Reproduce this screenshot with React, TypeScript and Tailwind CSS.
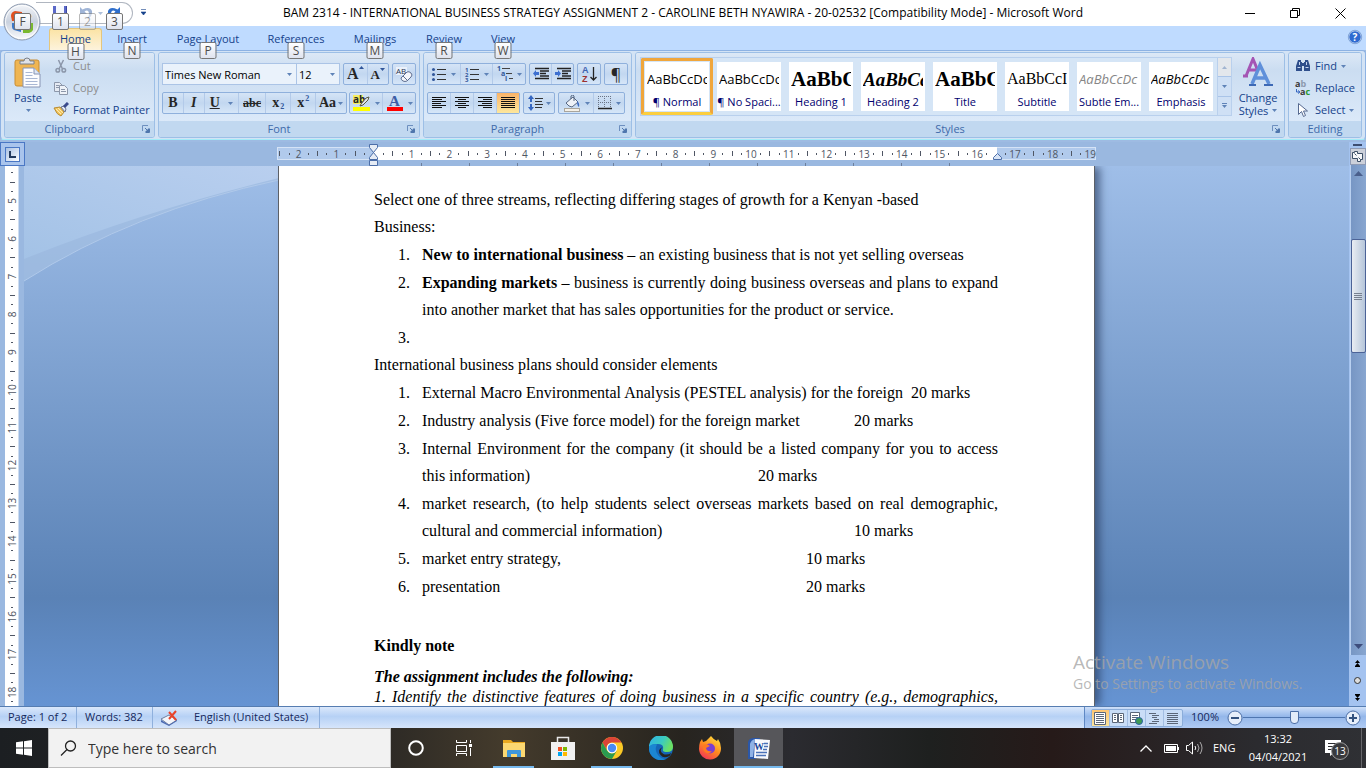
import React from "react";

const cx = (...parts: (string | false | undefined)[]) => parts.filter(Boolean).join(" ");

/* ---------- small shared parts ---------- */

function Caret({ className }: { className?: string }) {
  return (
    <svg width="5" height="3" viewBox="0 0 5 3" className={cx("shrink-0", className)} aria-hidden="true">
      <path d="M0 0h5L2.500 3z" fill="#5f83b8" />
    </svg>
  );
}

function KeyTip({ k, className, faded }: { k: string; className?: string; faded?: boolean }) {
  return (
    <span
      className={cx(
        "absolute z-20 flex h-[17px] w-[17px] items-center justify-center rounded-xs border border-[#767676] bg-linear-to-b from-white to-[#dfe3ee] text-[12px] leading-none text-[#4c4c4c]",
        faded && "opacity-50",
        className,
      )}
    >
      {k}
    </span>
  );
}

function Launcher() {
  return (
    <svg width="8" height="8" viewBox="0 0 8 8" aria-hidden="true">
      <path d="M.5 6V.5H6" fill="none" stroke="#6d8fbf" />
      <path d="M3 3l3 3M7.500 3.500v4h-4" fill="none" stroke="#4f76ad" />
      <path d="M7 3v4H3z" fill="#4f76ad" />
    </svg>
  );
}

function Group({
  label,
  launcher,
  className,
  children,
}: {
  label: string;
  launcher?: boolean;
  className?: string;
  children: React.ReactNode;
}) {
  return (
    <section
      aria-label={label}
      className={cx(
        "flex h-[86px] flex-col overflow-hidden rounded-[3px] border border-[#9dbfe6] bg-[#c7dcf3] shadow-[inset_0_0_0_1px_rgba(255,255,255,0.45)]",
        className,
      )}
    >
      <div className="min-h-0 flex-1 bg-linear-to-b from-[#dce8f6] via-[#cbddf1] via-25% to-[#dbe9f9]">{children}</div>
      <div
        className={cx(
          "relative flex h-4 items-center justify-center bg-[#c1d8f0] text-[11px] text-[#3e6aaa]",
          launcher && "pr-5",
        )}
      >
        {label}
        {launcher && (
          <button aria-label={label + " options"} className="absolute right-1">
            <Launcher />
          </button>
        )}
      </div>
    </section>
  );
}

function Bar({ children, className }: { children: React.ReactNode; className?: string }) {
  return (
    <div
      className={cx(
        "flex h-[22px] divide-x divide-[#b3cae9] rounded-xs border border-[#8fb0dc] bg-linear-to-b from-[#d5e4f6] via-[#c2d7f0] via-50% to-[#d6e6f8]",
        className,
      )}
    >
      {children}
    </div>
  );
}

function Tool({
  label,
  className,
  caret,
  children,
}: {
  label: string;
  className?: string;
  caret?: boolean;
  children: React.ReactNode;
}) {
  return (
    <button aria-label={label} className={cx("flex grow items-center justify-center gap-1 text-[#262626]", className)}>
      {children}
      {caret && <Caret />}
    </button>
  );
}

/* ---------- icons ---------- */

function OfficeLogo() {
  return (
    <svg width="38" height="38" viewBox="0 0 38 38" aria-hidden="true">
      <defs>
        <linearGradient id="orb" x1="0" y1="0" x2="0" y2="1">
          <stop offset="0" stopColor="#f4f6fa" />
          <stop offset=".5" stopColor="#c9d1de" />
          <stop offset="1" stopColor="#fbfcfe" />
        </linearGradient>
      </defs>
      <circle cx="19" cy="19" r="18" fill="url(#orb)" stroke="#8b98ad" />
      <circle cx="19" cy="19" r="16.500" fill="none" stroke="#fff" opacity=".8" />
      <path d="M8 13q0-4 4-5l7 1v9H9z" fill="#e0501f" />
      <path d="M20 10l7 1q2 1 1 4v4h-8z" fill="#f0a020" />
      <path d="M9 20h9v9l-7-2q-2-1-2-3z" fill="#3c78c8" />
      <path d="M20 20h10v7q-1 2-4 3h-6z" fill="#7ab830" />
      <path d="M22 22h5v5h-5z" fill="#f6d23a" />
    </svg>
  );
}

function SaveIcon() {
  return (
    <svg width="16" height="16" viewBox="0 0 16 16" aria-hidden="true">
      <path d="M1 1h14v14H1z" fill="#5a68c8" />
      <path d="M4 1h8v8H4z" fill="#f5f8ff" />
      <path d="M4 11h8v4H4z" fill="#c6cdea" />
      <path d="M14.500 1v14" stroke="#3a45a0" />
    </svg>
  );
}

function ArcArrow({ color, flip }: { color: string; flip?: boolean }) {
  return (
    <svg width="16" height="16" viewBox="0 0 16 16" aria-hidden="true" className={flip ? "-scale-x-100" : ""}>
      <path d="M2 2v7h7L6.500 6.500Q10 4 11 8q.5 3-2 6 6-3 5-8Q12 1 4.500 4.500z" fill={color} />
    </svg>
  );
}

function PasteIcon() {
  return (
    <svg width="28" height="32" viewBox="0 0 28 32" aria-hidden="true">
      <rect x="1" y="3" width="24" height="26" rx="2" fill="#efb552" stroke="#c98d33" />
      <path d="M6 7V4h4q0-3 3-3t3 3h4v3z" fill="#dfe2e8" stroke="#7b8089" />
      <path d="M9 11h11l6 6v13H9z" fill="#fdfdff" stroke="#8794b4" />
      <path d="M20 11v6h6" fill="#dfe7f5" stroke="#8794b4" />
      <path d="M11.500 15.500h7M11.500 18.500h7M11.500 21.500h12M11.500 24.500h12M11.500 27.500h12" stroke="#a9b7d4" />
    </svg>
  );
}

function CutIcon() {
  return (
    <svg width="16" height="16" viewBox="0 0 16 16" fill="none" stroke="#8c97aa" strokeWidth="1.500" aria-hidden="true">
      <path d="M5.500 2l4 9M10.500 2L6 11" />
      <circle cx="4.800" cy="12.300" r="1.800" />
      <circle cx="10.800" cy="12.300" r="1.800" />
    </svg>
  );
}

function CopyIcon() {
  return (
    <svg width="16" height="16" viewBox="0 0 16 16" stroke="#8c97aa" aria-hidden="true">
      <path d="M1.500 2.500h5l3 3v6h-8z" fill="#e6ebf4" />
      <path d="M6.500 5.500h5l3 3v6h-8z" fill="#eef2f8" />
      <path d="M3 5.500h3M3 7.500h3M8 9.500h4M8 11.500h5" />
    </svg>
  );
}

function PainterIcon() {
  return (
    <svg width="16" height="16" viewBox="0 0 16 16" aria-hidden="true">
      <path d="M1 6l6-1 4 5-3 4q-4-1-7-8z" fill="#f3c860" stroke="#b78b34" />
      <path d="M3 7l5 5M5 6l5 5" stroke="#fbe9b4" />
      <path d="M8 5l3-1 2 3-1 3z" fill="#e7ebf4" stroke="#6b7690" />
      <path d="M11 5l4-4" stroke="#3a4a8c" strokeWidth="3" />
    </svg>
  );
}

function EraserIcon() {
  return (
    <svg width="18" height="18" viewBox="0 0 18 18" className="overflow-visible" aria-hidden="true">
      <rect x="1" y="2" width="11" height="8" fill="#eaf1fb" />
      <text x="1" y="9" fontSize="8" fontFamily="Open Sans, sans-serif" fill="#26324f">
        AB
      </text>
      <path d="M6 13l6-6q2-1 4 1t0 4l-4 4q-2 1-4 0t-2-3z" fill="#f4f6fb" stroke="#5e6e90" />
      <path d="M8 11l4 4" stroke="#5e6e90" />
    </svg>
  );
}

function HighlightIcon() {
  return (
    <svg width="18" height="18" viewBox="0 0 18 18" className="overflow-visible" aria-hidden="true">
      <rect x="0" y="1" width="10" height="9" fill="#f5ee62" />
      <text x="0" y="9" fontSize="10" fontFamily="Open Sans, sans-serif" fill="#262626">
        ab
      </text>
      <path d="M8 10l5-6 3-1-1 3-5 5-3 1z" fill="#dfe4ee" stroke="#5a5a40" />
      <rect x="0" y="13" width="17" height="4" fill="#ffff00" />
    </svg>
  );
}

function FontColorIcon() {
  return (
    <svg width="18" height="18" viewBox="0 0 18 18" className="overflow-visible" aria-hidden="true">
      <text x="3" y="12" fontSize="15" fontWeight="700" fontFamily="Liberation Serif, serif" fill="#3c5da5">
        A
      </text>
      <rect x="1" y="13" width="16" height="4" fill="#ff0000" />
    </svg>
  );
}

function ListIcon({ kind }: { kind: "dots" | "nums" | "levels" }) {
  return (
    <svg width="16" height="16" viewBox="0 0 16 16" className="overflow-visible" aria-hidden="true">
      {kind === "levels" ? (
        <>
          <path d="M5 2.500h8M9 7.500h6M12 12.500h4" stroke="#444" />
          <g fontSize="7" fontWeight="700" fontFamily="Open Sans, sans-serif" fill="#31569a">
            <text x="0" y="5">1</text>
            <text x="4" y="10">a</text>
            <text x="8" y="15">i</text>
          </g>
        </>
      ) : (
        <path d="M6 3.500h9M6 8.500h9M6 13.500h9" stroke="#333" />
      )}
      {kind === "dots" && (
        <g fill="#31569a">
          <circle cx="2.500" cy="3.500" r="1.500" />
          <circle cx="2.500" cy="8.500" r="1.500" />
          <circle cx="2.500" cy="13.500" r="1.500" />
        </g>
      )}
      {kind === "nums" && (
        <g fontSize="6" fontWeight="700" fontFamily="Open Sans, sans-serif" fill="#31569a">
          <text x="1" y="5.500">1</text>
          <text x="1" y="10.500">2</text>
          <text x="1" y="15.500">3</text>
        </g>
      )}
    </svg>
  );
}

function IndentIcon({ inward }: { inward?: boolean }) {
  return (
    <svg width="16" height="14" viewBox="0 0 16 14" aria-hidden="true">
      <path d="M2 1.500h14M7 4h9M7 6.500h6M7 9h9M2 11.500h14" stroke="#222" strokeWidth="1.300" />
      <path d={inward ? "M6 6.500L3 3v2H0v3h3v2z" : "M0 6.500L3 3v2h3v3H3v2z"} fill="#3d6fd0" />
    </svg>
  );
}

function SortIcon() {
  return (
    <svg width="16" height="18" viewBox="0 0 16 18" className="overflow-visible" aria-hidden="true">
      <g fontSize="9" fontWeight="700" fontFamily="Liberation Sans, sans-serif">
        <text x="1" y="8" fill="#3d62b0">A</text>
        <text x="1" y="17" fill="#9c3030">Z</text>
      </g>
      <path d="M12.500 2v13M9.500 12l3 3 3-3" fill="none" stroke="#222" strokeWidth="1.300" />
    </svg>
  );
}

function AlignIcon({ rows }: { rows: [number, number][] }) {
  return (
    <svg width="14" height="12" viewBox="0 0 14 12" aria-hidden="true">
      {rows.map(([x, w], i) => (
        <path key={i} d={`M${x} ${i * 2 + 0.5}h${w}`} stroke="#111" />
      ))}
    </svg>
  );
}

const ALIGN: { name: string; rows: [number, number][] }[] = [
  { name: "Align left", rows: [[0, 14], [0, 10], [0, 14], [0, 9], [0, 14], [0, 10]] },
  { name: "Center", rows: [[0, 14], [3, 8], [0, 14], [3, 8], [0, 14], [3, 8]] },
  { name: "Align right", rows: [[0, 14], [5, 9], [0, 14], [4, 10], [0, 14], [5, 9]] },
  { name: "Justify", rows: [[0, 14], [0, 14], [0, 14], [0, 14], [0, 14], [0, 14]] },
];

function SpacingIcon() {
  return (
    <svg width="16" height="16" viewBox="0 0 16 16" aria-hidden="true">
      <path d="M3 0l3 4H4v3H2V4H0zM3 16l3-4H4V9H2v3H0z" fill="#3566c0" />
      <path d="M7 3.500h8M7 6.500h7M7 9.500h8M7 12.500h7" stroke="#333" />
    </svg>
  );
}

function ShadingIcon() {
  return (
    <svg width="18" height="17" viewBox="0 0 18 17" aria-hidden="true">
      <path d="M3 8l7-6 5 5-6 5q-3 0-6-4z" fill="#eef2f8" stroke="#566681" />
      <path d="M8 4V1q2-2 3 0v5" fill="none" stroke="#566681" />
      <path d="M14 6q3 2 2 6-2-1-2-6z" fill="#3f6cc0" />
      <rect x="1.500" y="13.500" width="15" height="3" fill="#f5f1e8" stroke="#a9a59c" />
    </svg>
  );
}

function BordersIcon() {
  return (
    <svg width="14" height="14" viewBox="0 0 14 14" aria-hidden="true">
      <path d="M.5 0v13M6.500 0v13M12.500 0v13M0 .5h13M0 6.500h13" stroke="#6a7486" strokeDasharray="1 1" />
      <path d="M0 12.500h14" stroke="#222" strokeWidth="1.500" />
    </svg>
  );
}

function ChangeStylesIcon() {
  return (
    <svg width="32" height="30" viewBox="0 0 32 30" aria-hidden="true">
      <path d="M1 19h5M4 19L11 2l5 12M6 13h8" fill="none" stroke="#a455b4" strokeWidth="3" />
      <path d="M10 27L18 8l9 19M13 21h11" fill="none" stroke="#5f90da" strokeWidth="3.500" />
      <path d="M7 28h7M22 28h9" stroke="#3d69b5" strokeWidth="2" />
    </svg>
  );
}

function FindIcon() {
  return (
    <svg width="16" height="14" viewBox="0 0 16 14" aria-hidden="true">
      <path d="M3 1h3v2h1v9H1V7zM10 1h3l2 6v5H9V3h1z" fill="#2f4f8c" />
      <path d="M7 4h2v3H7z" fill="#2f4f8c" />
      <path d="M2.500 8.500h3M10.500 8.500h3M4.500 3v3M11.500 3v3" stroke="#c6d6f0" />
    </svg>
  );
}

function ReplaceIcon() {
  return (
    <svg width="16" height="16" viewBox="0 0 16 16" className="overflow-visible" aria-hidden="true">
      <g fontSize="9" fontWeight="700" fontFamily="Open Sans, sans-serif">
        <text x="0" y="7" fill="#3a3a3a">
          a<tspan fill="#8d99ad">b</tspan>
        </text>
        <text x="5" y="15" fill="#3a3a3a">
          a<tspan fill="#2a9a30">c</tspan>
        </text>
      </g>
      <path d="M1.500 9v3h3M3 10.500l2 1.500-2 1.500" fill="none" stroke="#3566c0" />
    </svg>
  );
}

function SelectIcon() {
  return (
    <svg width="16" height="16" viewBox="0 0 16 16" aria-hidden="true">
      <path d="M3.500 1.500v11l3-3 2 5 2-1-2-4.500h4z" fill="#fff" stroke="#56698f" />
    </svg>
  );
}

/* ---------- title bar and tabs ---------- */

function TitleBar() {
  return (
    <header className="relative grid h-[26px] shrink-0 grid-cols-[1fr_auto_1fr] items-center bg-white">
      <button aria-label="Office Button" className="absolute top-[3px] left-[3px] z-20">
        <OfficeLogo />
        <KeyTip k="F" className="top-[10px] left-[11px]" />
      </button>
      <div className="flex h-full items-start gap-2 pl-[36px]">
        <div className="mt-[2px] flex h-[22px] w-[97px] items-start rounded-r-full border border-l-0 border-[#b0b6c0] bg-white pl-4">
          <button aria-label="Save" className="relative mt-[2px] w-[26px]">
            <SaveIcon />
            <KeyTip k="1" className="top-[8px] left-0" />
          </button>
          <button aria-label="Undo" className="relative mt-[2px] flex w-[28px] items-center">
            <ArcArrow color="#9fb4d6" />
            <Caret className="ml-1 opacity-50" />
            <KeyTip k="2" faded className="top-[8px] left-px" />
          </button>
          <button aria-label="Redo" className="relative mt-[2px]">
            <ArcArrow color="#2f6fcc" flip />
            <KeyTip k="3" className="top-[8px] left-0" />
          </button>
        </div>
        <button aria-label="Customize toolbar" className="mt-[9px]">
          <svg width="5" height="6" viewBox="0 0 5 6" aria-hidden="true">
            <path d="M0 .5h5M0 3h5L2.500 6z" fill="#15428b" stroke="#15428b" strokeWidth=".6" />
          </svg>
        </button>
      </div>
      <h1 className="text-[12px] whitespace-nowrap text-black">
        BAM 2314 - INTERNATIONAL BUSINESS STRATEGY ASSIGNMENT 2 - CAROLINE BETH NYAWIRA - 20-02532 [Compatibility Mode] -
        Microsoft Word
      </h1>
      <div className="flex justify-end gap-[35px] pr-[20px]">
        <button aria-label="Minimize">
          <svg width="10" height="10" viewBox="0 0 10 10" aria-hidden="true">
            <path d="M0 5.500h10" stroke="#000" />
          </svg>
        </button>
        <button aria-label="Restore">
          <svg width="10" height="10" viewBox="0 0 10 10" fill="none" stroke="#000" aria-hidden="true">
            <path d="M.5 2.500h7v7h-7zM2.500 2.500v-2h7v7h-2" />
          </svg>
        </button>
        <button aria-label="Close">
          <svg width="11" height="11" viewBox="0 0 11 11" stroke="#000" aria-hidden="true">
            <path d="M.5.500l10 10M10.500.500l-10 10" />
          </svg>
        </button>
      </div>
    </header>
  );
}

const TABS = [
  { name: "Home", k: "H", w: "w-[53px]" },
  { name: "Insert", k: "N", w: "w-[60px]" },
  { name: "Page Layout", k: "P", w: "w-[92px]" },
  { name: "References", k: "S", w: "w-[84px]" },
  { name: "Mailings", k: "M", w: "w-[74px]" },
  { name: "Review", k: "R", w: "w-[64px]" },
  { name: "View", k: "W", w: "w-[54px]" },
];

function TabRow() {
  return (
    <nav className="flex h-6 shrink-0 items-end bg-[#bfdbff] pl-[49px]">
      {TABS.map((t, i) => (
        <button
          key={t.name}
          className={cx(
            "relative flex h-[22px] items-center justify-center text-[11px] whitespace-nowrap text-[#15428b]",
            t.w,
            i === 0 && "rounded-t-[3px] border border-b-0 border-[#e5c67c] bg-linear-to-b from-[#fbe3a4] to-[#fdf3dc]",
          )}
        >
          {t.name}
          <KeyTip k={t.k} className="top-[14px] left-1/2 -translate-x-1/2" />
        </button>
      ))}
      <button aria-label="Help" className="mr-[4px] mb-[6px] ml-auto">
        <svg width="14" height="14" viewBox="0 0 14 14" className="overflow-visible" aria-hidden="true">
          <circle cx="7" cy="7" r="6.300" fill="#2f6bd0" stroke="#e8f0fc" />
          <circle cx="7" cy="7" r="6.700" fill="none" stroke="#4a78c0" strokeWidth=".6" />
          <text x="7" y="11" fontSize="10" fontWeight="700" textAnchor="middle" fontFamily="Open Sans, sans-serif" fill="#fff">
            ?
          </text>
        </svg>
      </button>
    </nav>
  );
}

/* ---------- ribbon ---------- */

function SideCommand({ icon, label, caret, off }: { icon: React.ReactNode; label: string; caret?: boolean; off?: boolean }) {
  return (
    <button
      className={cx(
        "flex h-[22px] items-center gap-1 text-[11px] whitespace-nowrap",
        off ? "text-[#8d8d8d]" : "text-[#15428b]",
      )}
    >
      {icon}
      {label}
      {caret && <Caret />}
    </button>
  );
}

const STYLES = [
  { name: "¶ Normal", sample: "AaBbCcDc", cls: "text-[13px] font-[Open_Sans]" },
  { name: "¶ No Spaci...", sample: "AaBbCcDc", cls: "text-[13px] font-[Open_Sans]" },
  { name: "Heading 1", sample: "AaBbC", cls: "text-[21px] font-bold font-[Liberation_Serif]" },
  { name: "Heading 2", sample: "AaBbCc", cls: "text-[19px] font-bold italic font-[Liberation_Serif]" },
  { name: "Title", sample: "AaBbC", cls: "text-[21px] font-bold font-[Liberation_Serif]" },
  { name: "Subtitle", sample: "AaBbCcI", cls: "text-[16px] font-[Liberation_Serif]" },
  { name: "Subtle Em...", sample: "AaBbCcDc", cls: "text-[13px] italic text-[#868686] font-[Open_Sans]" },
  { name: "Emphasis", sample: "AaBbCcDc", cls: "text-[13px] italic font-[Open_Sans]" },
];

function Ribbon() {
  return (
    <div className="h-[92px] shrink-0 bg-[#9ebbe2]">
      <div className="flex h-[90px] gap-[3px] rounded-[4px] border border-[#8db2e3] border-b-[#a4ecf8] bg-[#d3e3f5] px-[3px] pt-px">
        <Group label="Clipboard" launcher className="w-[151px]">
          <div className="flex h-full">
            <button className="flex w-[46px] flex-col items-center pt-1 text-[11px] text-[#15428b]">
              <PasteIcon />
              <span className="leading-[18px]">Paste</span>
              <Caret className="mt-[2px]" />
            </button>
            <div className="flex flex-col pt-[2px] pl-[2px]">
              <SideCommand icon={<CutIcon />} label="Cut" off />
              <SideCommand icon={<CopyIcon />} label="Copy" off />
              <SideCommand icon={<PainterIcon />} label="Format Painter" />
            </div>
          </div>
        </Group>

        <Group label="Font" launcher className="w-[262px]">
          <div className="flex flex-col gap-[7px] px-[3px] pt-[10px]">
            <div className="flex justify-between gap-[3px]">
              <div className="flex flex-1 divide-x divide-[#abc4e6] border border-[#abc4e6] bg-[#eaf2fb]">
                <label className="relative flex flex-1 items-center">
                  <select aria-label="Font" className="w-full appearance-none pl-[2px] text-[11px] leading-none text-black">
                    <option>Times New Roman</option>
                  </select>
                  <Caret className="absolute right-1" />
                </label>
                <label className="relative flex w-[42px] items-center">
                  <select aria-label="Font size" className="w-full appearance-none pl-[2px] text-[11px] leading-none text-black">
                    <option>12</option>
                  </select>
                  <Caret className="absolute right-1" />
                </label>
              </div>
              <Bar className="w-[46px]">
                <Tool label="Grow font" className="font-[Liberation_Serif] text-[16px] leading-none font-bold">
                  <span className="flex items-start">
                    A<svg width="5" height="3" viewBox="0 0 5 3" aria-hidden="true"><path d="M0 3h5L2.500 0z" fill="#31569a" /></svg>
                  </span>
                </Tool>
                <Tool label="Shrink font" className="font-[Liberation_Serif] text-[13px] leading-none font-bold">
                  <span className="flex items-start">
                    A<svg width="5" height="3" viewBox="0 0 5 3" aria-hidden="true"><path d="M0 0h5L2.500 3z" fill="#31569a" /></svg>
                  </span>
                </Tool>
              </Bar>
              <Bar className="w-6">
                <Tool label="Clear formatting"><EraserIcon /></Tool>
              </Bar>
            </div>
            <div className="flex justify-between font-[Liberation_Serif] text-[14px] leading-none font-bold">
              <Bar className="w-[185px]">
                <Tool label="Bold" className="w-[21px]">B</Tool>
                <Tool label="Italic" className="w-[21px] italic">I</Tool>
                <Tool label="Underline" caret className="w-[34px] gap-2"><span className="underline">U</span></Tool>
                <Tool label="Strikethrough" className="w-[28px] text-[12px] line-through">abc</Tool>
                <Tool label="Subscript" className="w-[25px] gap-px">x<span className="self-end pb-[2px] text-[8px] text-[#31569a]">2</span></Tool>
                <Tool label="Superscript" className="w-[25px] gap-px">x<span className="self-start pt-[2px] text-[8px] text-[#31569a]">2</span></Tool>
                <Tool label="Change case" caret className="w-[30px] gap-[2px]">Aa</Tool>
              </Bar>
              <Bar className="w-[67px]">
                <Tool label="Highlight" caret><HighlightIcon /></Tool>
                <Tool label="Font color" caret><FontColorIcon /></Tool>
              </Bar>
            </div>
          </div>
        </Group>

        <Group label="Paragraph" launcher className="w-[209px]">
          <div className="flex flex-col gap-[7px] px-[3px] pt-[10px]">
            <div className="flex gap-[3px]">
              <Bar className="w-[99px]">
                <Tool label="Bullets" caret><ListIcon kind="dots" /></Tool>
                <Tool label="Numbering" caret><ListIcon kind="nums" /></Tool>
                <Tool label="Multilevel list" caret><ListIcon kind="levels" /></Tool>
              </Bar>
              <Bar className="w-[45px]">
                <Tool label="Decrease indent"><IndentIcon /></Tool>
                <Tool label="Increase indent"><IndentIcon inward /></Tool>
              </Bar>
              <Bar className="w-6">
                <Tool label="Sort"><SortIcon /></Tool>
              </Bar>
              <Bar className="w-6">
                <Tool label="Show marks" className="text-[16px] leading-none">¶</Tool>
              </Bar>
            </div>
            <div className="flex gap-[3px]">
              <Bar className="w-[93px]">
                {ALIGN.map((a) => (
                  <Tool key={a.name} label={a.name} className={a.name === "Justify" ? "bg-linear-to-b from-[#f9b368] to-[#fde79c]" : ""}>
                    <AlignIcon rows={a.rows} />
                  </Tool>
                ))}
              </Bar>
              <Bar className="w-[32px]">
                <Tool label="Line spacing" caret className="gap-[2px]"><SpacingIcon /></Tool>
              </Bar>
              <Bar className="w-[67px]">
                <Tool label="Shading" caret><ShadingIcon /></Tool>
                <Tool label="Borders" caret><BordersIcon /></Tool>
              </Bar>
            </div>
          </div>
        </Group>

        <Group label="Styles" launcher className="min-w-0 flex-1">
          <div className="flex h-full justify-between pt-1 pr-[2px] pl-1">
            <div className="flex h-[59px] border border-[#b9d0ed] bg-[#d5e5f6]">
              {STYLES.map((s, i) => (
                <button
                  key={s.name}
                  className={cx(
                    "h-[57px] w-[72px] border-[3px] p-px",
                    i === 0 ? "rounded-xs border-[#f0a63c] border-b-[#fbce3f]" : "border-transparent",
                  )}
                >
                  <span className="flex h-[49px] w-16 flex-col overflow-hidden bg-white">
                    <span className={cx("mx-[2px] flex h-[34px] items-center overflow-hidden leading-none whitespace-nowrap", s.cls)}>
                      {s.sample}
                    </span>
                    <span className="text-center text-[11px] leading-3 whitespace-nowrap text-[#00006e]">{s.name}</span>
                  </span>
                </button>
              ))}
              <div className="flex w-[14px] flex-col divide-y divide-[#a9c4e8] border-l border-[#b9d0ed]">
                <button aria-label="Scroll styles up" className="flex flex-1 items-center justify-center bg-[#e3e7ec]">
                  <Caret className="rotate-180 opacity-50" />
                </button>
                <button aria-label="Scroll styles down" className="flex flex-1 items-center justify-center bg-[#cfe0f5]">
                  <Caret />
                </button>
                <button aria-label="More styles" className="flex flex-1 flex-col items-center justify-center gap-px border-t-0 bg-[#cfe0f5]">
                  <span className="h-px w-[5px] bg-[#5f83b8]" />
                  <Caret />
                </button>
              </div>
            </div>
            <button className="flex w-[48px] flex-col items-center text-[11px] leading-[13px] text-[#15428b]">
              <ChangeStylesIcon />
              <span className="mt-1">Change</span>
              <span className="flex items-center gap-1">
                Styles <Caret />
              </span>
            </button>
          </div>
        </Group>

        <Group label="Editing" className="w-[74px]">
          <div className="flex flex-col items-start pt-[2px] pl-[6px]">
            <SideCommand icon={<FindIcon />} label="Find" caret />
            <SideCommand icon={<ReplaceIcon />} label="Replace" />
            <SideCommand icon={<SelectIcon />} label="Select" caret />
          </div>
        </Group>
      </div>
    </div>
  );
}

/* ---------- rulers ---------- */

const CM = 37.8;
const CM_ACROSS = 37.7;

function HorizontalRuler() {
  const zero = 97;
  const quarters = Array.from({ length: 87 }, (_, i) => i - 10);
  return (
    <svg width="819" height="24" viewBox="0 0 819 24" className="overflow-visible" aria-hidden="true">
      <rect x=".5" y="5.500" width="818" height="12" fill="#b1caec" stroke="#d5e3f6" />
      <rect x="97" y="5" width="623" height="13" fill="#fff" />
      {quarters.map((q) => {
        const x = zero + (q * CM_ACROSS) / 4;
        if (q === 0 || q === 66 || x > 818) return null;
        if (q % 4 === 0)
          return (
            <text key={q} x={x} y="15.500" fontSize="10" textAnchor="middle" fontFamily="Open Sans, sans-serif" fill="#4f5664">
              {Math.abs(q / 4)}
            </text>
          );
        const px = Math.floor(x) + 0.5;
        return <path key={q} d={q % 2 === 0 ? `M${px} 9v5` : `M${px} 11v2`} stroke="#4f5664" />;
      })}
      {Array.from({ length: 12 }, (_, i) => (
        <path key={i} d={`M${144.5 + i * 48} 21v3`} stroke="#6c7f9c" />
      ))}
      <path d="M92.500 2.500h8v3l-4 5-4-5zM92.500 17.500v-2l4-5 4 5v2zM92.500 18.500h8v5h-8z" fill="#e6ecf5" stroke="#4c6ea8" />
      <path d="M716.500 17.500v-2l4-4 4 4v2z" fill="#d7e3f5" stroke="#4c6ea8" />
    </svg>
  );
}

function VerticalRuler() {
  const quarters = Array.from({ length: 60 }, (_, i) => i + 17);
  return (
    <svg width="24" height="100%" aria-hidden="true" className="block h-full">
      <rect width="24" height="100%" fill="#9ab8e0" />
      <rect x="5" width="14" height="100%" fill="#fff" />
      <path d="M18.500 0v2000" stroke="#cddcf0" />
      {quarters.map((q) => {
        const y = 35 + (q / 4 - 5) * CM;
        if (q % 4 === 0)
          return (
            <text
              key={q}
              transform={`translate(16 ${y}) rotate(-90)`}
              fontSize="10"
              textAnchor="middle"
              fontFamily="Open Sans, sans-serif"
              fill="#4f5664"
            >
              {q / 4}
            </text>
          );
        const py = Math.floor(y) + 0.5;
        return <path key={q} d={q % 2 === 0 ? `M10 ${py}h5` : `M11 ${py}h2`} stroke="#4f5664" />;
      })}
    </svg>
  );
}

/* ---------- document ---------- */

function Marked({ children }: { children: React.ReactNode }) {
  return <span className="block whitespace-pre [tab-size:48px]">{children}</span>;
}

function Full({ children }: { children: React.ReactNode }) {
  return <span className="block whitespace-nowrap [text-align-last:justify]">{children}</span>;
}

function Numbered({ items }: { items: React.ReactNode[] }) {
  return (
    <ol className="pl-6">
      {items.map((item, i) => (
        <li key={i} className="mt-px grid grid-cols-[24px_minmax(0,1fr)]">
          <span>{i + 1}.</span>
          <div>{item}</div>
        </li>
      ))}
    </ol>
  );
}

const STREAMS = [
  <>
    <b>New to international business</b> – an existing business that is not yet selling overseas
  </>,
  <>
    <Full>
      <b>Expanding markets</b> – business is currently doing business overseas and plans to expand
    </Full>
    <Marked>into another market that has sales opportunities for the product or service.</Marked>
  </>,
  null,
];

const ELEMENTS = [
  <Marked>{"External Macro Environmental Analysis (PESTEL analysis) for the foreign  20 marks"}</Marked>,
  <Marked>{"Industry analysis (Five force model) for the foreign market\t\t20 marks"}</Marked>,
  <>
    <Full>Internal Environment for the company (it should be a listed company for you to access</Full>
    <Marked>{"this information)\t\t\t\t\t20 marks"}</Marked>
  </>,
  <>
    <Full>market research, (to help students select overseas markets based on real demographic,</Full>
    <Marked>{"cultural and commercial information)\t\t\t\t10 marks"}</Marked>
  </>,
  <Marked>{"market entry strategy,\t\t\t\t\t\t10 marks"}</Marked>,
  <Marked>{"presentation\t\t\t\t\t\t\t20 marks"}</Marked>,
];

function Page() {
  return (
    <article className="relative h-full w-[817px] overflow-hidden border-x border-[#5c6067] bg-white pt-5 pr-24 pl-[95px] font-[Liberation_Serif] text-[16px] leading-[27px] text-black shadow-[6px_0_8px_-1px_rgba(40,60,95,0.65)]">
      <p>Select one of three streams, reflecting differing stages of growth for a Kenyan -based</p>
      <p>Business:</p>
      <Numbered items={STREAMS} />
      <p>International business plans should consider elements</p>
      <Numbered items={ELEMENTS} />
      <p className="mt-8 font-bold">Kindly note</p>
      <p className="mt-2 leading-[20px] font-bold italic">The assignment includes the following:</p>
      <p className="leading-[20px] italic [text-align-last:justify]">
        1. Identify the distinctive features of doing business in a specific country (e.g., demographics,
      </p>
    </article>
  );
}

function Swoosh() {
  return (
    <svg width="255" height="120" viewBox="0 0 255 120" className="absolute top-0 left-0" aria-hidden="true">
      <defs>
        <linearGradient id="wash" x1="0" y1="1" x2="1" y2="0">
          <stop offset="0" stopColor="#a3c2e6" />
          <stop offset="1" stopColor="#b9cfef" />
        </linearGradient>
      </defs>
      <path d="M0 0h255v14Q110 45 0 115z" fill="#a6c1e3" opacity=".6" />
      <path d="M0 0h255v12Q120 45 0 93z" fill="url(#wash)" />
      <path d="M0 115Q110 45 255 14" fill="none" stroke="#b0c9ea" />
    </svg>
  );
}

function ScrollColumn() {
  return (
    <div className="row-span-2 flex flex-col items-center bg-[#a4c3f0]">
      <div className="mt-[2px] h-[2px] w-[9px] bg-[#3d4d70]" />
      <button aria-label="View ruler" className="mt-[2px] flex h-[17px] w-4 items-center justify-center border border-[#8f9bb5] bg-[#ccd0da]">
        <svg width="13" height="13" viewBox="0 0 13 13" fill="#f6f7fa" stroke="#3d5068" aria-hidden="true">
          <path d="M1.500 2.500h2v-1h3v2h5v6h-2v2h-3v-3h-5z" />
          <path d="M3.500 3.500l2 2M7.500 7.500l2 2" />
        </svg>
      </button>
      <div className="flex w-4 flex-1 flex-col items-center border-l border-[#b9d0f0] bg-linear-to-r from-[#7796c4] to-[#88a6d0]">
        <svg width="9" height="5" viewBox="0 0 9 5" className="mt-[6px]" aria-hidden="true">
          <path d="M0 5h9L4.500 0z" fill="#4a5f8c" />
        </svg>
        <div className="mt-[63px] flex h-[114px] w-[15px] flex-col items-center justify-center gap-px rounded-xs border border-[#4c6397] bg-linear-to-r from-[#e9edf2] to-[#b6c6da]">
          <span className="h-px w-2 bg-[#77808f]" />
          <span className="h-px w-2 bg-[#77808f]" />
          <span className="h-px w-2 bg-[#77808f]" />
          <span className="h-px w-2 bg-[#77808f]" />
        </div>
        <svg width="9" height="5" viewBox="0 0 9 5" className="mt-auto mb-[6px]" aria-hidden="true">
          <path d="M0 0h9L4.500 5z" fill="#3d4d7c" />
        </svg>
      </div>
      <div className="flex h-[51px] flex-col items-center justify-around">
        <svg width="7" height="7" viewBox="0 0 7 7" aria-hidden="true">
          <path d="M3.500 0L6 3H1zM3.500 3L6 6H1zM1 6h5v1H1z" />
        </svg>
        <svg width="7" height="7" viewBox="0 0 7 7" aria-hidden="true">
          <circle cx="3.500" cy="3.500" r="3" fill="#ddd" stroke="#333" />
        </svg>
        <svg width="7" height="7" viewBox="0 0 7 7" aria-hidden="true">
          <path d="M3.500 7L6 4H1zM3.500 4L6 1H1zM1 0h5v1H1z" />
        </svg>
      </div>
    </div>
  );
}

function Workspace() {
  return (
    <main className="relative grid min-h-0 flex-1 grid-cols-[24px_minmax(0,1fr)_17px] grid-rows-[24px_minmax(0,1fr)] bg-[#9ab8e0]">
      <div className="flex h-6 w-[25px] items-center justify-center border border-[#4a77c4] bg-[#a9c4ec]">
        <button aria-label="Tab selector" className="flex h-[15px] w-[15px] items-center justify-center border border-[#4a77c4] bg-linear-to-br from-[#a9c0e2] to-white">
          <svg width="7" height="7" viewBox="0 0 7 7" aria-hidden="true">
            <path d="M1 0v6h6" fill="none" stroke="#233a5e" strokeWidth="2" />
          </svg>
        </button>
      </div>
      <div className="flex justify-center overflow-hidden">
        <HorizontalRuler />
      </div>
      <ScrollColumn />
      <div className="overflow-hidden">
        <VerticalRuler />
      </div>
      <div className="relative flex justify-center overflow-hidden bg-linear-to-b from-[#9fbee8] via-[#5a82b6] via-80% to-[#6694d3]">
        <Swoosh />
        <Page />
      </div>
      <div className="pointer-events-none absolute right-[57px] bottom-[12px] w-[236px] whitespace-nowrap text-[#a6a6a6]/80">
        <p className="text-[19px] leading-[24px]">Activate Windows</p>
        <p className="text-[14px] leading-[20px]">Go to Settings to activate Windows.</p>
      </div>
    </main>
  );
}

/* ---------- status bar ---------- */

function StatusBar() {
  const lines = "M4 4.500h8M4 6.500h8M4 8.500h8M4 10.500h8M4 12.500h8";
  return (
    <footer className="flex h-[22px] shrink-0 items-stretch border-t border-[#567db1] bg-linear-to-b from-[#dbe8fb] via-[#b6d1f5] via-45% to-[#d6e5fb] text-[11px] text-[#15285c]">
      <div className="flex divide-x divide-[#8fb0dd] border-r border-[#8fb0dd]">
        <span className="flex w-[77px] items-center pl-2 whitespace-nowrap">Page: 1 of 2</span>
        <span className="flex w-[76px] items-center pl-2 whitespace-nowrap">Words: 382</span>
        <span className="flex w-[166px] items-center gap-4 pl-2 whitespace-nowrap">
          <svg width="17" height="16" viewBox="0 0 17 16" aria-hidden="true">
            <path d="M0 9l8-4 8 5-8 5z" fill="#f3f5fa" stroke="#6f7f9f" />
            <path d="M0 10v2l8 4 8-5v-1l-8 5z" fill="#4a68b0" />
            <path d="M8 2l7 8M15 1l-7 8" stroke="#e8432a" strokeWidth="2" />
          </svg>
          English (United States)
        </span>
      </div>
      <div className="ml-auto flex items-center border-l border-[#5f88c4] bg-linear-to-b from-[#cfe0f9] via-[#94b7ea] via-45% to-[#b0cbf3] pr-[5px] pl-[6px]">
        <div className="flex h-[18px] divide-x divide-[#a3bee3] rounded-xs border border-[#8badda] bg-[#c9ddf7]">
          {["Print layout", "Full screen reading", "Web layout", "Outline", "Draft"].map((v, i) => (
            <button key={v} aria-label={v} className={cx("w-[18px]", i === 0 && "bg-linear-to-b from-[#fdc573] to-[#fbe49c]")}>
              <svg width="16" height="16" viewBox="0 0 16 16" fill="none" stroke="#5b6678" aria-hidden="true">
                {i === 0 && <path d="M2.500 2.500h11v12h-11z" fill="#fff" />}
                {i === 0 && <path d={lines} />}
                {i === 1 && <path d="M2.500 3.500h5v9h-5zM8.500 3.500h5v9h-5zM4 5.500h2M4 7.500h2M4 9.500h2M10 5.500h2M10 7.500h2M10 9.500h2" fill="#fff" />}
                {i === 2 && <path d="M2.500 2.500h9v10h-9zM4 5.500h6M4 7.500h6M4 9.500h6" fill="#fff" />}
                {i === 2 && <circle cx="11" cy="11" r="3.500" fill="#3f9a55" stroke="#2c62a8" />}
                {i === 3 && <path d="M3 3.500h7M6 5.500h7M6 7.500h5M8 9.500h5M6 11.500h7M3 13.500h8" />}
                {i === 4 && <path d="M3 3.500h11M3 5.500h11M3 7.500h11M3 9.500h11M3 11.500h11M3 13.500h11" />}
              </svg>
            </button>
          ))}
        </div>
        <span className="w-[44px] text-center">100%</span>
        <button aria-label="Zoom out">
          <svg width="16" height="16" viewBox="0 0 16 16" aria-hidden="true">
            <circle cx="8" cy="8" r="7" fill="#e6eefa" stroke="#4b6ea6" />
            <path d="M4 8h8" stroke="#33527f" strokeWidth="2" />
          </svg>
        </button>
        <input
          type="range"
          aria-label="Zoom"
          min="0"
          max="200"
          defaultValue="100"
          className="h-4 w-[102px] appearance-none bg-[linear-gradient(#4f76b0,#4f76b0)] bg-size-[100%_1px] bg-center bg-no-repeat [&::-webkit-slider-thumb]:h-[13px] [&::-webkit-slider-thumb]:w-[9px] [&::-webkit-slider-thumb]:appearance-none [&::-webkit-slider-thumb]:rounded-b-[4px] [&::-webkit-slider-thumb]:border [&::-webkit-slider-thumb]:border-[#4b6ea6] [&::-webkit-slider-thumb]:bg-[#e3ecf9]"
        />
        <button aria-label="Zoom in">
          <svg width="16" height="16" viewBox="0 0 16 16" aria-hidden="true">
            <circle cx="8" cy="8" r="7" fill="#e6eefa" stroke="#4b6ea6" />
            <path d="M4 8h8M8 4v8" stroke="#33527f" strokeWidth="2" />
          </svg>
        </button>
      </div>
    </footer>
  );
}

/* ---------- taskbar ---------- */

function AppCell({ label, running, active, children }: { label: string; running?: boolean; active?: boolean; children: React.ReactNode }) {
  return (
    <button aria-label={label} className={cx("relative flex h-full w-[49px] items-center justify-center", active && "bg-[#56565a]")}>
      {children}
      {running && <span className={cx("absolute bottom-0 h-[2px] bg-[#76b9ed]", active ? "inset-x-0" : "inset-x-1")} />}
    </button>
  );
}

function Taskbar() {
  return (
    <div className="flex h-10 shrink-0 items-center bg-[linear-gradient(90deg,#1c1f22_0%,#2c2925_28%,#443b2c_37%,#27241f_50%,#2b2b30_58%,#1e201f_68%,#261a19_77%,#2b2b2f_92%,#2f3034_100%)] text-white">
      <button aria-label="Start" className="flex w-12 justify-center">
        <svg width="16" height="16" viewBox="0 0 16 16" fill="#fff" aria-hidden="true">
          <path d="M0 2.300L7 1.300v6.200H0zM8 1.200L16 0v7.500H8zM0 8.500h7v6.200l-7-1zM8 8.500h8V16l-8-1.200z" />
        </svg>
      </button>
      <label className="flex h-10 w-[343px] items-center gap-[11px] border border-[#bdbdbd] bg-[#f2f2f2] pl-[11px]">
        <svg width="17" height="17" viewBox="0 0 17 17" fill="none" stroke="#222" strokeWidth="1.300" aria-hidden="true">
          <circle cx="10.500" cy="6" r="5" />
          <path d="M7 9.500L1 15.500" />
        </svg>
        <input aria-label="Search" placeholder="Type here to search" className="min-w-0 flex-1 bg-transparent text-[14px] text-[#333] outline-none placeholder:text-[#333]" />
      </label>
      <AppCell label="Cortana">
        <svg width="16" height="16" viewBox="0 0 16 16" aria-hidden="true">
          <circle cx="8" cy="8" r="6.800" fill="none" stroke="#fff" strokeWidth="2" />
        </svg>
      </AppCell>
      <AppCell label="Task View">
        <svg width="17" height="16" viewBox="0 0 17 16" fill="none" stroke="#fff" aria-hidden="true">
          <path d="M.5 0v2.500h10V0M.5 5.500h10v6H.500zM.5 16v-2.500h10V16M14.500 0v3M14.500 8v8" />
          <path d="M13 4h3v3h-3z" fill="#fff" stroke="none" />
        </svg>
      </AppCell>
      <AppCell label="File Explorer" running>
        <svg width="22" height="19" viewBox="0 0 22 19" aria-hidden="true">
          <path d="M0 1h8l2 2h12v15H0z" fill="#e9a921" />
          <path d="M0 4h22v14H0z" fill="#fbd872" />
          <path d="M4 18v-6q0-1 1-1h12q1 0 1 1v6h-4v-3H8v3z" fill="#3f97da" />
        </svg>
      </AppCell>
      <AppCell label="Microsoft Store">
        <svg width="24" height="24" viewBox="0 0 24 24" aria-hidden="true">
          <path d="M6.500 7V1.500h11V7" fill="none" stroke="#e8e8e8" strokeWidth="1.500" />
          <path d="M0 6h24v18H0z" fill="#f1f1f1" />
          <path d="M7 11h4v4H7z" fill="#f25022" />
          <path d="M12 11h4v4h-4z" fill="#7fba00" />
          <path d="M7 16h4v4H7z" fill="#00a4ef" />
          <path d="M12 16h4v4h-4z" fill="#ffb900" />
        </svg>
      </AppCell>
      <AppCell label="Chrome" running>
        <svg width="22" height="22" viewBox="0 0 22 22" aria-hidden="true">
          <circle cx="11" cy="11" r="11" fill="#fbc926" />
          <path d="M1.500 5.500A11 11 0 0 1 20.500 5.500H11A5.500 5.500 0 0 0 6.200 13.700z" fill="#db4437" />
          <path d="M1.500 5.500A11 11 0 0 0 11 22l4.800-8.200A5.500 5.500 0 0 1 6.200 13.700z" fill="#2a9b50" />
          <circle cx="11" cy="11" r="5.200" fill="#fff" />
          <circle cx="11" cy="11" r="4.200" fill="#4a8af4" />
        </svg>
      </AppCell>
      <AppCell label="Edge">
        <svg width="24" height="24" viewBox="0 0 24 24" aria-hidden="true">
          <defs>
            <linearGradient id="edgeTop" x1="0" y1="0" x2="1" y2=".4">
              <stop offset="0" stopColor="#2fb0e8" />
              <stop offset=".6" stopColor="#3bcbc0" />
              <stop offset="1" stopColor="#6be065" />
            </linearGradient>
          </defs>
          <circle cx="12" cy="12" r="12" fill="#1466b8" />
          <path d="M0 11A12 12 0 0 1 24 11q0 5-6 5-5 0-4-3 1-5-5-5Q2 8 0 11z" fill="url(#edgeTop)" />
          <path d="M0 11q3-4 8-2.500Q5 14 9 19q3 4 8 4A12 12 0 0 1 0 11z" fill="#1b86d2" />
          <path d="M13.500 11q-4 4 1 7 3 1.500 8-1l-2 3q-6 3-9-1-4-5 2-8z" fill="#272520" />
        </svg>
      </AppCell>
      <AppCell label="Firefox">
        <svg width="24" height="24" viewBox="0 0 24 24" aria-hidden="true">
          <defs>
            <linearGradient id="fox" x1=".8" y1="0" x2=".2" y2="1">
              <stop offset="0" stopColor="#ffe13c" />
              <stop offset=".5" stopColor="#ff8a1f" />
              <stop offset="1" stopColor="#f0305a" />
            </linearGradient>
          </defs>
          <path d="M2 6l2-3 1 3 3-1 5-5q2 3 6 5l1-2q3 4 3 9a11 11 0 0 1-22 1q0-4 1-7z" fill="url(#fox)" />
          <circle cx="12" cy="12.500" r="5" fill="#7a3fd0" />
          <path d="M5 9q4-2 7 1l-4 2q1 4 6 3-3 4-7 1-3-3-2-7z" fill="#ff7a22" />
        </svg>
      </AppCell>
      <AppCell label="Microsoft Word" running active>
        <svg width="22" height="23" viewBox="0 0 22 23" aria-hidden="true">
          <path d="M0 5Q1 1 6 1h6L8 22H0z" fill="#2b57a8" />
          <path d="M2 7q1-4 5-5L5 20H2z" fill="#8fb2e6" />
          <path d="M7 2l15 1-2 19-14-1z" fill="#f7f9fd" />
          <path d="M16 6.500h4M16 9.500h4M15 12.500h4M8 15.500h11M8 18.500h10" stroke="#4a72b8" strokeWidth="1.500" />
          <text x="11" y="13" fontSize="10" fontWeight="700" textAnchor="middle" fontFamily="Liberation Serif, serif" fill="#24499a">
            W
          </text>
        </svg>
      </AppCell>
      <div className="ml-auto flex h-full items-center">
        <button aria-label="Hidden icons" className="mr-3">
          <svg width="12" height="7" viewBox="0 0 12 7" fill="none" stroke="#fff" strokeWidth="1.300" aria-hidden="true">
            <path d="M.5 6.500L6 1l5.500 5.500" />
          </svg>
        </button>
        <svg width="15" height="9" viewBox="0 0 15 9" className="mr-[7px]" aria-hidden="true">
          <path d="M.5.500h13v8H.500z" fill="none" stroke="#fff" />
          <path d="M2 2h10v5H2zM13.500 3H15v3h-1.500z" fill="#fff" />
        </svg>
        <svg width="17" height="14" viewBox="0 0 17 14" fill="none" stroke="#fff" className="mr-[10px]" aria-hidden="true">
          <path d="M.5 4.500h2l4-3.500v12l-4-3.500h-2z" />
          <path d="M9 5q1.500 2 0 4" />
          <path d="M11.500 3q3 4 0 8M14 1q4 6 0 12" opacity=".6" />
        </svg>
        <span className="w-[33px] text-[11px]">ENG</span>
        <div className="w-[64px] text-center text-[11px] leading-[18px]">
          <p>13:32</p>
          <p>04/04/2021</p>
        </div>
        <button aria-label="Notifications" className="relative ml-[15px] h-6 w-[26px]">
          <svg width="16" height="16" viewBox="0 0 16 16" aria-hidden="true">
            <path d="M0 0h16v13h-7l-4 3v-3H0z" fill="#fff" />
            <path d="M3 3.500h10M3 6.500h10M3 9.500h6" stroke="#2b2b2f" />
          </svg>
          <span className="absolute top-[6px] left-[6px] flex h-[18px] w-[18px] items-center justify-center rounded-full border border-[#9a9a9a] bg-[#3a3a3d] text-[10px]">
            13
          </span>
        </button>
        <span className="ml-[10px] h-full w-[5px] border-l border-[#66666a]" />
      </div>
    </div>
  );
}

export default function App() {
  return (
    <div className="flex h-screen flex-col overflow-hidden font-['Open_Sans','Noto_Sans',sans-serif]">
      <TitleBar />
      <TabRow />
      <Ribbon />
      <Workspace />
      <StatusBar />
      <Taskbar />
    </div>
  );
}
